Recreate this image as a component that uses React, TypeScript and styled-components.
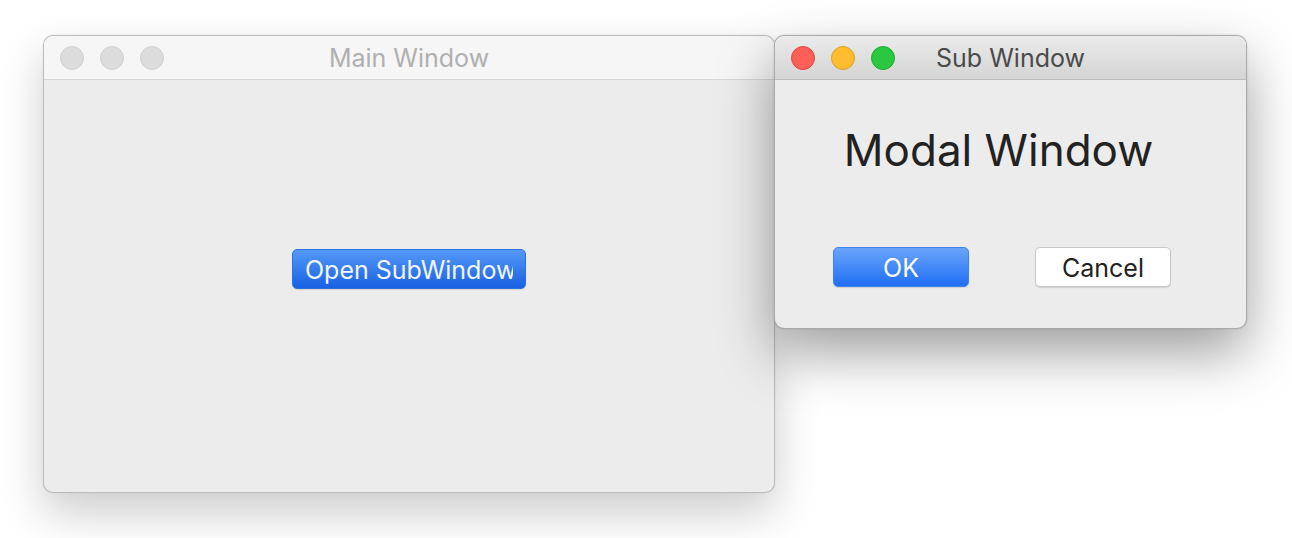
import styled, { createGlobalStyle } from "styled-components"

const GlobalStyle = createGlobalStyle`
    html, body {
        margin: 0;
        padding: 0;
        background: #ffffff;
    }
    body {
        font-family: 'Inter', 'Liberation Sans', sans-serif;
    }
`

const Desktop = styled.div`
    position: relative;
    width: 1292px;
    height: 538px;
    overflow: hidden;
    background: #ffffff;
`

const Window = styled.div<{ left: number, top: number, w: number, h: number, active?: boolean }>`
    position: absolute;
    left: ${({ left }) => left + "px"};
    top: ${({ top }) => top + "px"};
    width: ${({ w }) => w + "px"};
    height: ${({ h }) => h + "px"};
    box-sizing: border-box;
    display: flex;
    flex-direction: column;
    border-radius: 10px;
    overflow: hidden;
    background-color: #ececec;
    border: 1px solid ${({ active }) => active ? "rgba(0,0,0,0.28)" : "rgba(0,0,0,0.2)"};
    box-shadow: ${({ active }) => active
        ? "0 24px 55px rgba(0,0,0,0.38), 0 0 2px rgba(0,0,0,0.15)"
        : "0 20px 45px rgba(0,0,0,0.2), 0 0 2px rgba(0,0,0,0.08)"};
    z-index: ${({ active }) => active ? 2 : 1};
`

const TitleBar = styled.div<{ active?: boolean }>`
    position: relative;
    height: 43px;
    flex-shrink: 0;
    display: flex;
    align-items: center;
    padding-left: 16px;
    gap: 16px;
    background: ${({ active }) => active
        ? "linear-gradient(#ebebeb, #d4d4d4)"
        : "#f6f6f6"};
    border-bottom: 1px solid ${({ active }) => active ? "#bdbdbd" : "#d6d6d6"};
`

const Light = styled.div<{ color: string, edge: string }>`
    width: 22px;
    height: 22px;
    border-radius: 50%;
    background-color: ${({ color }) => color};
    border: 1px solid ${({ edge }) => edge};
`

const Title = styled.div<{ active?: boolean }>`
    position: absolute;
    left: 0;
    right: 0;
    top: 1px;
    bottom: 0;
    display: flex;
    justify-content: center;
    align-items: center;
    font-size: 25px;
    color: ${({ active }) => active ? "#4a4a4a" : "#b0b0b0"};
    pointer-events: none;
`

const MainBody = styled.div`
    flex: 1;
    display: flex;
    justify-content: center;
    padding-top: 169px;
`

const PushButton = styled.button<{ primary?: boolean, w: number }>`
    width: ${({ w }) => w + "px"};
    height: 40px;
    box-sizing: border-box;
    padding: 0 14px;
    border-radius: 5px;
    font-family: 'Inter', 'Liberation Sans', sans-serif;
    font-size: 25px;
    line-height: 40px;
    text-align: center;
    color: ${({ primary }) => primary ? "#ffffff" : "#222222"};
    background: ${({ primary }) => primary ? "linear-gradient(#69a5fa, #1f6ef4)" : "#ffffff"};
    border: 1px solid ${({ primary }) => primary ? "#3f84ec" : "#c9c9c9"};
    box-shadow: 0 1px 1px rgba(0,0,0,0.12);
`

const DefaultButton = styled(PushButton)`
    text-align: left;
    padding: 0 12px;
    background: linear-gradient(#5499f8, #1961e2);
    border-color: #2e72e0;
`

const Clip = styled.span`
    display: block;
    overflow: hidden;
    white-space: nowrap;
    color: #f2f6ff;
`

const SubBody = styled.div`
    flex: 1;
    display: flex;
    flex-direction: column;
    align-items: center;
`

const Heading = styled.div`
    margin-top: 40px;
    font-size: 44px;
    line-height: 60px;
    color: #222222;
    padding-right: 24px;
`

const ButtonRow = styled.div`
    align-self: stretch;
    display: flex;
    gap: 66px;
    padding-left: 58px;
    margin-top: 67px;
`

function TrafficLights({ active }: { active?: boolean }) {
    if (!active) {
        return (
            <>
                <Light color="#dcdcdc" edge="#d0d0d0" />
                <Light color="#dcdcdc" edge="#d0d0d0" />
                <Light color="#dcdcdc" edge="#d0d0d0" />
            </>
        )
    }
    return (
        <>
            <Light color="#fe5f57" edge="#e0443e" />
            <Light color="#febc2e" edge="#dea123" />
            <Light color="#29c840" edge="#1dab2b" />
        </>
    )
}

export default function App() {
    return (
        <Desktop>
            <GlobalStyle />
            <Window left={43} top={35} w={732} h={458}>
                <TitleBar>
                    <TrafficLights />
                    <Title>Main Window</Title>
                </TitleBar>
                <MainBody>
                    <DefaultButton w={234} primary>
                        <Clip>Open SubWindow</Clip>
                    </DefaultButton>
                </MainBody>
            </Window>

            <Window left={774} top={35} w={473} h={294} active>
                <TitleBar active>
                    <TrafficLights active />
                    <Title active>Sub Window</Title>
                </TitleBar>
                <SubBody>
                    <Heading>Modal Window</Heading>
                    <ButtonRow>
                        <PushButton w={136} primary>OK</PushButton>
                        <PushButton w={136}>Cancel</PushButton>
                    </ButtonRow>
                </SubBody>
            </Window>
        </Desktop>
    )
}
